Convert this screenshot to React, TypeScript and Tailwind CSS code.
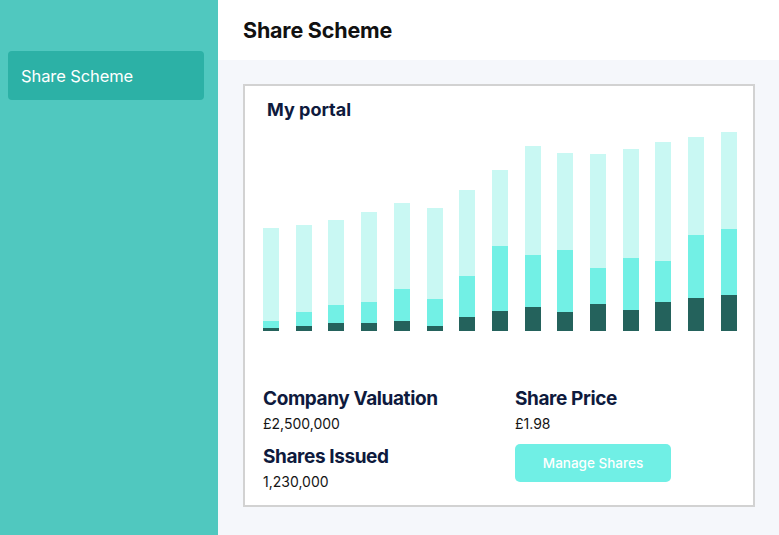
import React from "react";

interface Bar {
  total: number;
  mid: number;
  dark: number;
}

// heights in px, measured from the chart baseline
const bars: Bar[] = [
  { total: 103, mid: 10, dark: 3 },
  { total: 106, mid: 19, dark: 5 },
  { total: 111, mid: 26, dark: 8 },
  { total: 119, mid: 29, dark: 8 },
  { total: 128, mid: 42, dark: 10 },
  { total: 123, mid: 32, dark: 5 },
  { total: 141, mid: 55, dark: 14 },
  { total: 161, mid: 85, dark: 20 },
  { total: 185, mid: 76, dark: 24 },
  { total: 178, mid: 81, dark: 19 },
  { total: 177, mid: 63, dark: 27 },
  { total: 182, mid: 73, dark: 21 },
  { total: 189, mid: 70, dark: 29 },
  { total: 194, mid: 96, dark: 33 },
  { total: 199, mid: 102, dark: 36 },
];

function Chart() {
  return (
    <div className="flex h-[209px] items-end justify-between">
      {bars.map((b, i) => (
        <div
          key={i}
          className="flex w-4 flex-col justify-end bg-[#c9f8f3]"
          style={{ height: b.total }}
        >
          <div
            className="flex flex-col justify-end bg-[#72f0e5]"
            style={{ height: b.mid }}
          >
            <div className="bg-[#24625c]" style={{ height: b.dark }} />
          </div>
        </div>
      ))}
    </div>
  );
}

function Stat({ label, value }: { label: string; value: string }) {
  return (
    <div>
      <h3 className="text-[19px] font-bold leading-6 tracking-[-0.4px] text-[#0e1a3d]">{label}</h3>
      <p className="mt-[3px] text-[14px] leading-5 text-[#151515]">{value}</p>
    </div>
  );
}

export default function App() {
  return (
    <div
      className="flex h-[535px] w-[779px] overflow-hidden"
      style={{ fontFamily: "Inter, 'Noto Sans', sans-serif" }}
    >
      <aside className="w-[218px] shrink-0 bg-[#50c8bf] pt-[51px]">
        <div className="ml-2 flex h-[49px] w-[196px] items-center rounded bg-[#2cb1a6] px-[13px] pt-[2px] text-[16.5px] tracking-[-0.1px] text-white">
          Share Scheme
        </div>
      </aside>

      <div className="flex flex-1 flex-col bg-[#f5f7fb]">
        <header className="flex h-[60px] items-center bg-white pl-[25px]">
          <h1 className="text-[21.5px] font-bold leading-7 tracking-[-0.2px] text-[#111]">Share Scheme</h1>
        </header>

        <main className="pl-[25px] pr-6 pt-6">
          <div className="h-[423px] border-2 border-[#d2d2d2] bg-white pl-[18px] pr-4 pt-3">
            <h2 className="pl-1 text-[18px] font-bold leading-6 text-[#0e1a3d]">My portal</h2>
            <Chart />

            <div className="mt-[56px] grid grid-cols-[252px_1fr]">
              <div>
                <Stat label="Company Valuation" value="£2,500,000" />
                <div className="mt-[11px]">
                  <Stat label="Shares Issued" value="1,230,000" />
                </div>
              </div>
              <div>
                <Stat label="Share Price" value="£1.98" />
                <button className="mt-[10px] h-[38px] w-[156px] rounded-[5px] bg-[#70efe5] text-[13.5px] font-medium text-white">
                  Manage Shares
                </button>
              </div>
            </div>
          </div>
        </main>
      </div>
    </div>
  );
}
